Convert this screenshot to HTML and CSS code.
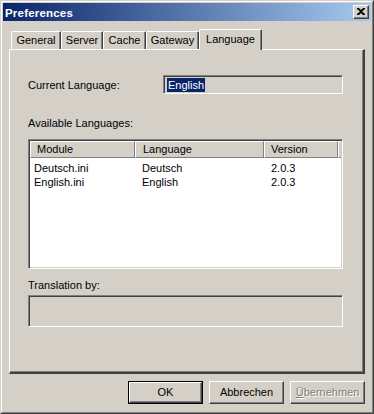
FILE: index.html
```html
<!DOCTYPE html>
<html>
<head>
<meta charset="utf-8">
<link rel="stylesheet" href="styles.css">
</head>
<body>
<div class="window">
  <div class="frame">
    <div class="titlebar">
      <span class="title">Preferences</span>
      <div class="closebtn">
        <svg width="8" height="7" viewBox="0 0 8 7"><path d="M0 0h2l2 2 2-2h2v1L5 3.5 8 6v1H6L4 5 2 7H0V6l3-2.5L0 1z" fill="#000"/></svg>
      </div>
    </div>
    <div class="tabs">
      <div class="tab t1">General</div>
      <div class="tab t2">Server</div>
      <div class="tab t3">Cache</div>
      <div class="tab t4">Gateway</div>
      <div class="tab sel">Language</div>
    </div>
    <div class="panel">
      <div class="row1">
        <span class="label">Current Language:</span>
        <div class="field"><span class="selected">English</span></div>
      </div>
      <div class="label avail">Available Languages:</div>
      <div class="listview">
        <div class="header">
          <div class="hcell c1">Module</div>
          <div class="hcell c2">Language</div>
          <div class="hcell c3">Version</div>
          <div class="hcell c4"></div>
        </div>
        <div class="lrow">
          <div class="cell c1">Deutsch.ini</div>
          <div class="cell c2">Deutsch</div>
          <div class="cell c3">2.0.3</div>
        </div>
        <div class="lrow">
          <div class="cell c1">English.ini</div>
          <div class="cell c2">English</div>
          <div class="cell c3">2.0.3</div>
        </div>
      </div>
      <div class="label trans">Translation by:</div>
      <div class="field tbox"></div>
    </div>
    <div class="buttons">
      <div class="btn default"><div class="btnin">OK</div></div>
      <div class="btn"><div class="btnin">Abbrechen</div></div>
      <div class="btn disabled"><div class="btnin"><span class="u">Ü</span>bernehmen</div></div>
    </div>
  </div>
</div>
</body>
</html>
```
FILE: styles.css
```css
* { box-sizing: border-box; }
html, body { margin: 0; padding: 0; background: #d4d0c8; }
body {
  font-family: "Liberation Sans", Arial, sans-serif;
  font-size: 11px;
  color: #000;
}
.window {
  width: 374px;
  height: 414px;
  border: 1px solid;
  border-color: #d4d0c8 #404040 #404040 #d4d0c8;
  background: #d4d0c8;
}
.frame {
  height: 100%;
  border: 1px solid;
  border-color: #fff #808080 #808080 #fff;
  padding: 1px;
  display: flex;
  flex-direction: column;
}
.titlebar {
  height: 18px;
  background: linear-gradient(to right, #0a246a, #a6caf0);
  display: flex;
  align-items: center;
  padding: 0 2px 0 2px;
}
.title {
  color: #fff;
  font-weight: bold;
  font-size: 11.5px;
  letter-spacing: 0.2px;
  flex: 1;
  padding-top: 1px;
}
.closebtn {
  width: 16px;
  height: 14px;
  background: #d4d0c8;
  border: 1px solid;
  border-color: #fff #404040 #404040 #fff;
  box-shadow: inset -1px -1px 0 #808080;
  display: flex;
  align-items: center;
  justify-content: center;
  padding: 0 1px 1px 0;
}
.tabs {
  display: flex;
  align-items: flex-end;
  height: 20px;
  margin-top: 8px;
  padding-left: 8px;
}
.tab {
  height: 18px;
  border-top: 1px solid #fff;
  border-left: 1px solid #fff;
  border-right: 1px solid #404040;
  box-shadow: inset -1px 0 0 #808080;
  border-top-left-radius: 2px;
  border-top-right-radius: 1px;
  text-align: center;
  line-height: 17px;
}
.t1 { width: 50px; }
.t2 { width: 42px; }
.t3 { width: 43px; }
.t4 { width: 53px; }
.sel {
  width: 63px;
  height: 21px;
  line-height: 18px;
  margin-bottom: -1px;
  position: relative;
  z-index: 1;
  background: #d4d0c8;
}
.panel {
  width: 356px;
  margin-left: 6px;
  height: 325px;
  border: 1px solid #fff;
  border-right: 2px solid #404040;
  border-bottom: 2px solid #404040;
  box-shadow: inset -1px -1px 0 #808080;
  padding: 25px 20px 0 18px;
  display: flex;
  flex-direction: column;
}
.row1 {
  display: flex;
  align-items: center;
  height: 19px;
}
.row1 .label { width: 135px; }
.field {
  width: 180px;
  height: 19px;
  border: 1px solid;
  border-color: #808080 #fff #fff #808080;
  box-shadow: inset 1px 1px 0 #404040, inset -1px -1px 0 #d4d0c8;
  padding: 2px 0 0 3px;
}
.selected {
  display: inline-block;
  background: #0a246a;
  color: #fff;
  line-height: 14px;
  padding: 0 1px;
}
.avail { margin-top: 23px; line-height: 13px; }
.listview {
  margin-top: 9px;
  width: 315px;
  height: 130px;
  background: #fff;
  border: 1px solid;
  border-color: #808080 #fff #fff #808080;
  box-shadow: inset 1px 1px 0 #404040, inset -1px -1px 0 #d4d0c8;
  padding: 1px;
}
.header {
  display: flex;
  height: 17px;
  background: #d4d0c8;
}
.hcell {
  height: 17px;
  border-top: 1px solid #fff;
  border-left: 1px solid #fff;
  border-right: 1px solid #808080;
  border-bottom: 1px solid #808080;
  line-height: 15px;
}
.header .c1 { width: 105px; padding-left: 6px; }
.header .c2 { width: 129px; padding-left: 7px; }
.header .c3 { width: 74px; padding-left: 6px; }
.header .c4 { flex: 1; border-right: none; }
.lrow {
  display: flex;
  height: 14px;
  line-height: 14px;
}
.header + .lrow { margin-top: 3px; }
.cell { white-space: nowrap; }
.lrow .c1 { width: 105px; padding-left: 4px; }
.lrow .c2 { width: 129px; padding-left: 7px; }
.lrow .c3 { width: 74px; padding-left: 7px; }
.trans { margin-top: 10px; line-height: 13px; }
.tbox {
  margin-top: 3px;
  width: 315px;
  height: 32px;
}
.buttons {
  display: flex;
  justify-content: flex-end;
  gap: 6px;
  margin-top: 7px;
  padding-right: 6px;
}
.btn {
  width: 75px;
  height: 23px;
  border: 1px solid;
  border-color: #fff #404040 #404040 #fff;
  box-shadow: inset -1px -1px 0 #808080;
}
.btnin {
  height: 100%;
  display: flex;
  align-items: center;
  justify-content: center;
  padding-bottom: 1px;
}
.btn.default {
  border: 1px solid #000;
  box-shadow: none;
}
.btn.default .btnin {
  border: 1px solid;
  border-color: #fff #404040 #404040 #fff;
  box-shadow: inset -1px -1px 0 #808080;
}
.btn.disabled .btnin {
  color: #808080;
  text-shadow: 1px 1px 0 #fff;
}
.u { text-decoration: underline; }
```
